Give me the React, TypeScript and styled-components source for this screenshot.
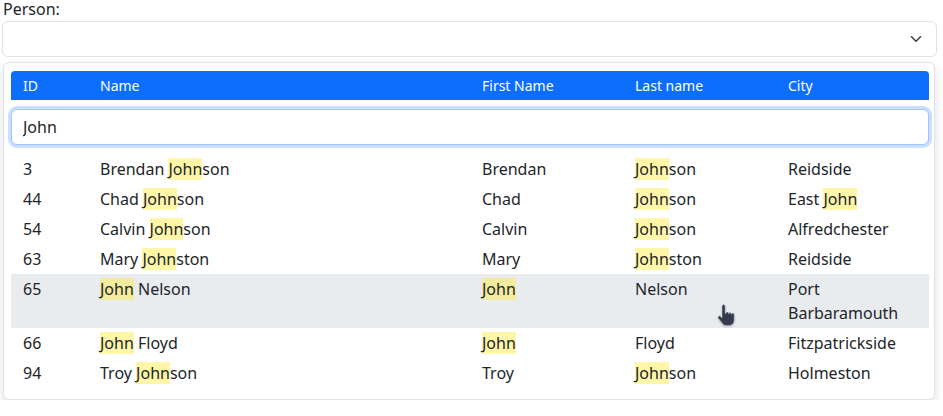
import React, { useState } from "react";
import styled, { createGlobalStyle } from "styled-components";

interface Person {
    id: number;
    name: string;
    firstName: string;
    lastName: string;
    city: string;
}

const people: Person[] = [
    { id: 3, name: "Brendan Johnson", firstName: "Brendan", lastName: "Johnson", city: "Reidside" },
    { id: 44, name: "Chad Johnson", firstName: "Chad", lastName: "Johnson", city: "East John" },
    { id: 54, name: "Calvin Johnson", firstName: "Calvin", lastName: "Johnson", city: "Alfredchester" },
    { id: 63, name: "Mary Johnston", firstName: "Mary", lastName: "Johnston", city: "Reidside" },
    { id: 65, name: "John Nelson", firstName: "John", lastName: "Nelson", city: "Port Barbaramouth" },
    { id: 66, name: "John Floyd", firstName: "John", lastName: "Floyd", city: "Fitzpatrickside" },
    { id: 94, name: "Troy Johnson", firstName: "Troy", lastName: "Johnson", city: "Holmeston" },
];

// splits text around the search term and wraps matches in <Mark>
const Highlight = ({ text, term }: { text: string; term: string }) => {
    if (!term) return <>{text}</>;
    const parts = text.split(new RegExp(`(${term})`, "i"));
    return (
        <>
            {parts.map((part, i) =>
                part.toLowerCase() === term.toLowerCase() ? <Mark key={i}>{part}</Mark> : <React.Fragment key={i}>{part}</React.Fragment>
            )}
        </>
    );
};

const App = () => {
    const [search, setSearch] = useState("John");
    const hovered = 65;

    return (
        <>
            <GlobalStyle />
            <Page>
                <Label>Person:</Label>
                <Select>
                    <svg width="12" height="12" viewBox="0 0 16 16" fill="none">
                        <path d="M2 5l6 6 6-6" stroke="#343a40" strokeWidth="2" strokeLinecap="round" strokeLinejoin="round" />
                    </svg>
                </Select>
                <Dropdown>
                    <HeaderRow>
                        <HeaderCell>ID</HeaderCell>
                        <HeaderCell>Name</HeaderCell>
                        <HeaderCell>First Name</HeaderCell>
                        <HeaderCell>Last name</HeaderCell>
                        <HeaderCell>City</HeaderCell>
                    </HeaderRow>
                    <SearchInput value={search} onChange={(e) => setSearch(e.target.value)} autoFocus />
                    <Rows>
                        {people.map((p) => (
                            <Row key={p.id} $hover={p.id === hovered}>
                                <Cell>{p.id}</Cell>
                                <Cell><Highlight text={p.name} term={search} /></Cell>
                                <Cell><Highlight text={p.firstName} term={search} /></Cell>
                                <Cell><Highlight text={p.lastName} term={search} /></Cell>
                                <Cell><Highlight text={p.city} term={search} /></Cell>
                            </Row>
                        ))}
                    </Rows>
                </Dropdown>
                <Pointer width="22" height="24" viewBox="0 0 22 24">
                    <path
                        d="M6 2.2a1.6 1.6 0 0 1 3.2 0V9.5h.6a1.4 1.4 0 0 1 2.8 0v.4a1.4 1.4 0 0 1 2.8 0v.6a1.4 1.4 0 0 1 2.8 0V16c0 3.4-2.2 5.6-5.4 5.6h-2.4c-2 0-3.2-.9-4.2-2.4L2.2 14.2a1.5 1.5 0 0 1 2.3-1.9L6 14Z"
                        fill="#353a4c"
                        stroke="rgba(255,255,255,0.6)"
                        strokeWidth="0.6"
                    />
                </Pointer>
            </Page>
        </>
    );
};

export default App;

const GlobalStyle = createGlobalStyle`
    body {
        margin: 0;
        background: #ffffff;
        font-family: "Noto Sans", "Open Sans", sans-serif;
        color: #212529;
    }
`;

const Page = styled.div`
    position: relative;
    width: 935px;
    margin-left: 2px;
    display: flex;
    flex-direction: column;
`;

const Label = styled.label`
    display: block;
    font-size: 16px;
    line-height: 18px;
    padding-left: 1px;
    height: 21px;
    color: #212529;
`;

const Select = styled.div`
    height: 34px;
    border: 1px solid #dee2e6;
    border-radius: 6px;
    display: flex;
    align-items: center;
    justify-content: flex-end;
    padding-right: 14px;
    box-sizing: content-box;
`;

const Dropdown = styled.div`
    margin-top: 5px;
    margin-left: 1px;
    width: 918px;
    border: 1px solid #dee2e6;
    border-radius: 6px;
    background: #ffffff;
    padding: 8px 5px 11px 7px;
    box-shadow: 0 6px 12px rgba(0, 0, 0, 0.12);
    display: flex;
    flex-direction: column;
`;

const columns = "77px 382px 153px 153px 1fr";

const HeaderRow = styled.div`
    display: grid;
    grid-template-columns: ${columns};
    height: 29px;
    align-items: center;
    background: #0d6efd;
    color: #ffffff;
    border-radius: 4px 4px 0 0;
    font-size: 14px;
`;

const HeaderCell = styled.div`
    padding: 0 12px;
`;

const SearchInput = styled.input`
    margin-top: 9px;
    height: 36px;
    box-sizing: border-box;
    border: 1px solid #9ec5fe;
    border-radius: 6px;
    box-shadow: 0 0 0 3px rgba(13, 110, 253, 0.22);
    padding: 0 11px;
    font-family: "Noto Sans", "Open Sans", sans-serif;
    font-size: 16px;
    color: #212529;
    outline: none;
    caret-color: #212529;
`;

const Rows = styled.div`
    margin-top: 9px;
    display: flex;
    flex-direction: column;
`;

const Row = styled.div<{ $hover: boolean }>`
    display: grid;
    grid-template-columns: ${columns};
    background: ${(p) => (p.$hover ? "#e9ecef" : "transparent")};
    font-size: 16px;
    line-height: 24px;
`;

const Cell = styled.div`
    padding: 3px 12px;
`;

const Mark = styled.mark`
    background: rgba(255, 235, 59, 0.45);
    color: inherit;
    padding: 0;
`;

const Pointer = styled.svg`
    position: absolute;
    left: 714px;
    top: 304px;
    filter: drop-shadow(0 1px 1px rgba(0, 0, 0, 0.25));
`;
